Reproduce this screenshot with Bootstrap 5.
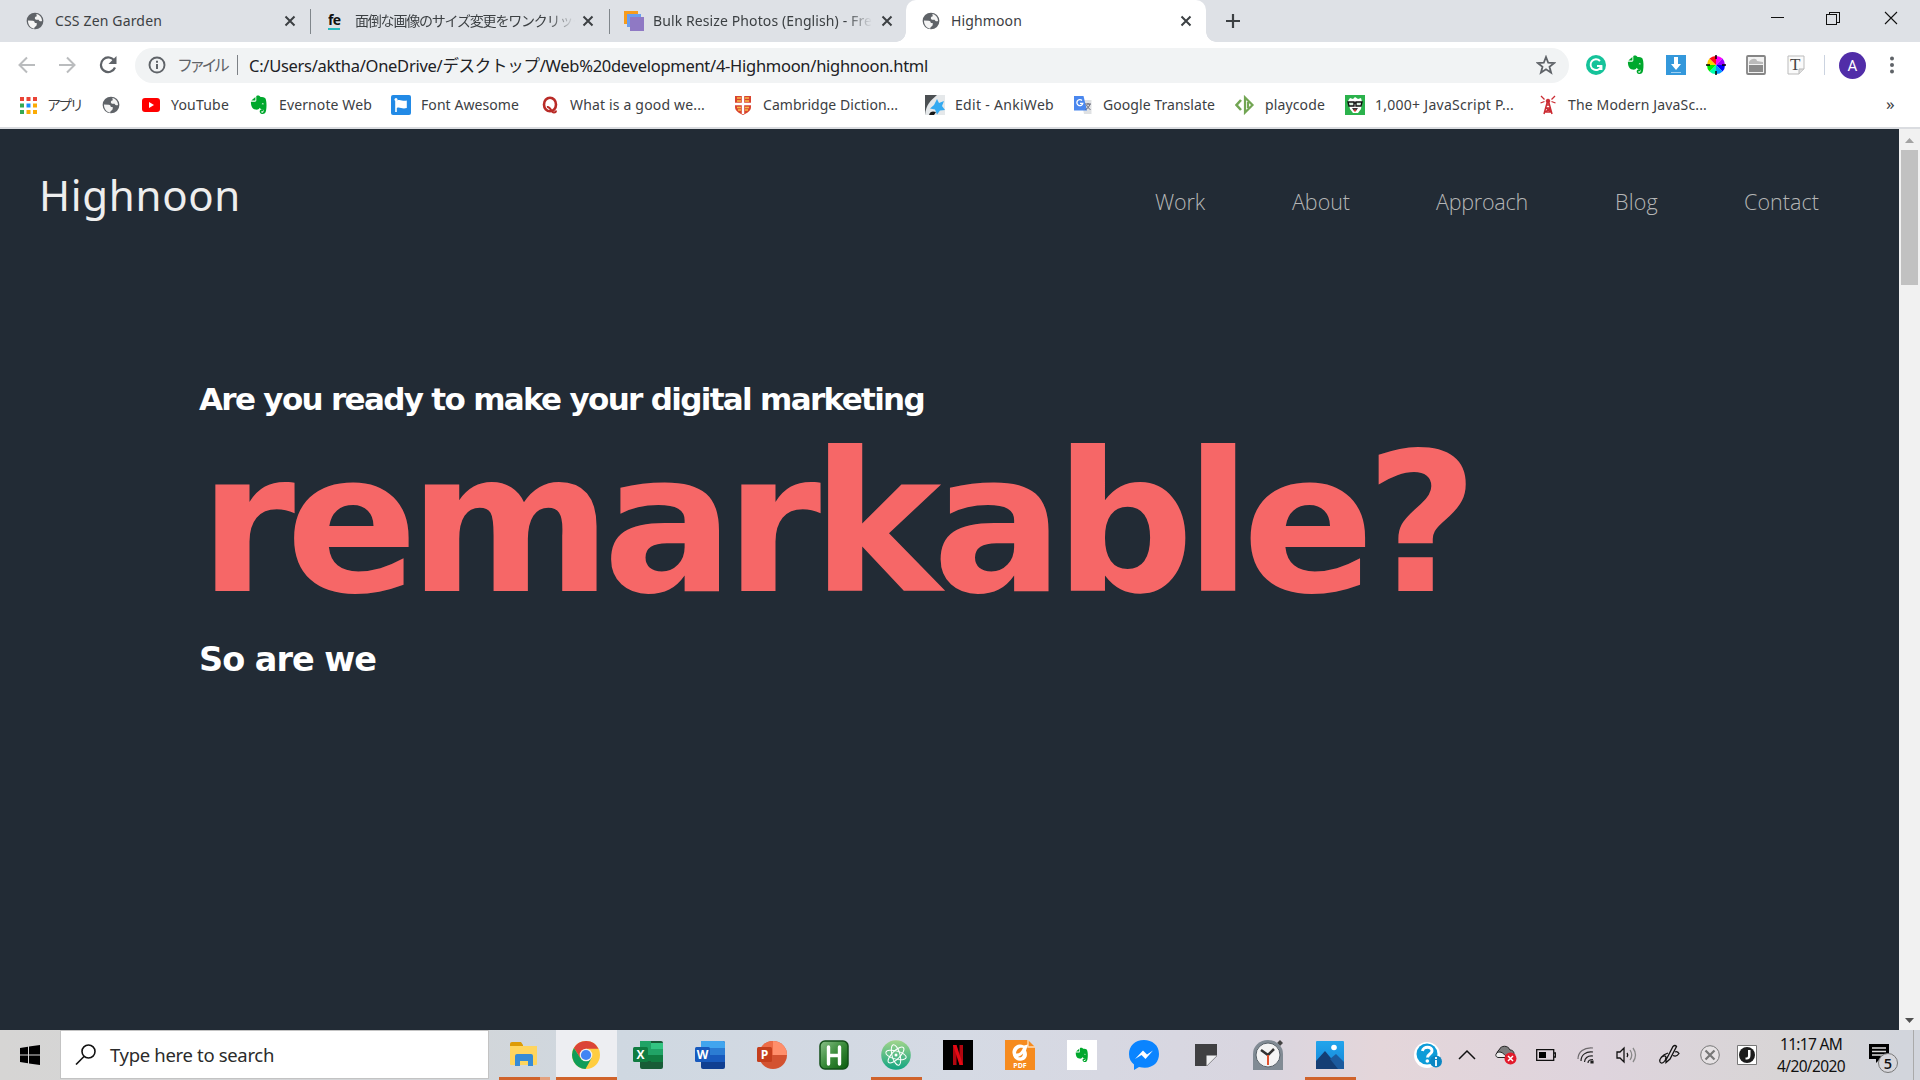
<!DOCTYPE html>
<html lang="en">
<head>
<meta charset="utf-8">
<title>Highmoon</title>
<link href="https://cdn.jsdelivr.net/npm/bootstrap@5.3.0/dist/css/bootstrap.min.css" rel="stylesheet">
<style>
body{width:1920px;height:1080px;overflow:hidden;background:#fff;font-family:"Noto Sans","Noto Sans CJK JP",sans-serif;color:#3c4043}
svg{display:block;flex:none}
[data-w]{white-space:nowrap;display:inline-block}
.tabstrip{height:42px;background:#dee1e6;font-size:14px}
.btab{height:42px;line-height:42px;padding-left:24px;position:relative}
.btab .fav{width:22px;margin-right:9px}
.btab .ttl{height:42px;overflow:hidden;white-space:nowrap}
.fade-r{-webkit-mask-image:linear-gradient(90deg,#000 88%,transparent)}
.btab.t1{width:310px}.btab.t2{width:299px;padding-left:18px}.btab.t3{width:297px}.btab.on{width:300px;background:#fff;border-radius:10px 10px 0 0;padding-left:14px}
.btab.on:before,.btab.on:after{content:"";position:absolute;bottom:0;width:10px;height:10px}
.btab.on:before{left:-10px;background:radial-gradient(circle at 0 0,transparent 9.5px,#fff 10px)}
.btab.on:after{right:-10px;background:radial-gradient(circle at 100% 0,transparent 9.5px,#fff 10px)}
.tsep{width:1px;height:25px;background:#80868b;position:absolute;right:-1px;top:9px}
.toolbar{height:46px;padding-left:7px}
.tcell{width:40px}
.omni{width:1434px;height:35px;border-radius:18px;background:#f1f3f4;margin:0 7px 0 6px;line-height:33px;font-size:16.5px;color:#202124}
.bookmarks{display:grid;grid-template-columns:83px 40px 108px 142px 149px 193px 192px 148px 162px 110px 193px 342px 30px;padding-left:16px;font-size:14px;line-height:34px;height:34px}
.bookmarks>div{display:flex;align-items:center;gap:8px;white-space:nowrap}
.bookmarks .ic{width:24px;display:flex;justify-content:center}
.bline{height:2px;background:#dadce0;margin-top:5px}
.viewport{height:901px}
.site{width:1899px;background:#222b35;font-family:"DejaVu Sans",sans-serif}
.scroller{width:21px;background:#f1f1f1;padding:0 2px}
.thumb{height:135px;background:#c1c1c1}
.sitehead{height:148px;padding:37px 0 0 39px}
.logo{font-family:"Noto Sans",sans-serif;font-size:42px;line-height:58px;color:#eee}
.sitenav{display:grid;grid-template-columns:137px 144px 179px 129px 155px;font-family:"Open Sans","Noto Sans",sans-serif;font-weight:300;font-size:21.5px;line-height:30px;color:#b5b6b6;padding-top:21px}
.hero{padding:72px 0 0 199px;font-weight:700;color:#fff}
.l1{font-size:31px;line-height:50px;padding-top:25px}
.l2{font-size:195px;line-height:210px;color:#f66767;margin-top:-5px}
.l3{font-size:33.5px;line-height:50px;margin-top:6px}
.taskbar{height:50px;background:linear-gradient(90deg,#d6d5d4 0,#d2d6da 480px,#cfd8e1 620px,#d5dae4 960px,#d9d6e0 1250px,#e4d6da 1380px,#ded4dd 1600px,#d8d5d6 1780px,#d2d5dc 1900px)}
.searchbox{width:429px;height:49px;background:#fff;border:1px solid #c3c3c3;font-size:18.5px;color:#2b2b2b;line-height:46px;margin-bottom:1px}
.app{width:62px;height:50px;position:relative;display:flex;align-items:center;justify-content:center}
.app.run:after{content:"";position:absolute;bottom:0;left:6px;width:51px;height:3px;background:#d0632b}
.app.multi:after{background:linear-gradient(90deg,#d0632b 41px,#e3a17e 41px)}
.app.front{background:linear-gradient(90deg,transparent 1px,#edeef2 1px)}
.app.front:after{left:1px;width:61px}
.tray{margin-left:47px;display:grid;grid-template-columns:39px 39px 40px 40px 40px 40px 45px 38px 35px 94px 55px 6px}
.tray>div{display:flex;align-items:center;justify-content:center}
.clk{font-size:15.5px;line-height:22.5px;color:#111;flex-direction:column}
.tline{border-left:1px solid #aaa}
</style>
<script src="https://cdn.jsdelivr.net/npm/bootstrap@5.3.0/dist/js/bootstrap.bundle.min.js"></script>
</head>
<body class="d-flex flex-column">
<svg width="0" height="0" class="position-absolute">
<symbol id="globe" viewBox="0 0 20 20"><circle cx="10" cy="10" r="9.3" fill="#5f6368"/><path d="M2.2 9.5l5.3.2c1.6.2 2.3 1.1 2.3 2.6h2.1v2.3l-2.7 2.8v1.1C5 18 2.1 14 2.2 9.500zM11.500 2.200C15 3 17.700 5.500 17.800 10c-1.400.8-3 .5-3.800-1.500h-3c-1.400-.8-1.600-2.300-.5-3.300l1.500-.4z" fill="#fff" opacity=".93"/></symbol>
<symbol id="close" viewBox="0 0 12 12"><path d="M1.500 1.500l9 9m0-9l-9 9" stroke="#3c4043" stroke-width="2"/></symbol>
<symbol id="elephant" viewBox="0 0 20 22"><path d="M7 1c2-1 4-.4 4.700 1.200 2 .1 4.600.3 5.500 1.500 1.300 3 1.500 9 .6 13.700-.5 2.600-2 3.900-4.500 3.600-3-.3-3.400-4.400-.8-4.900l2 .2v1.700h-1.600c-.8.700-.3 1.500.6 1.500 1.800-.1 1.800-2 1.300-3.200-1.600-.4-3.500-.8-4-2.300C9.800 16 8 16.500 6 16 2.500 15.500 1 12 1 7.300h4.300C6.800 7.300 7 6.500 7 5.500zM6 2v4H1.500z" fill="#00a82d"/><path d="M13 10.300c.3-1.500 2-1.600 2.500 0z" fill="#fff"/></symbol>
</svg>

<header class="tabstrip d-flex">
 <div class="btab t1 d-flex align-items-center"><svg class="fav" width="18" height="18"><use href="#globe"/></svg><div class="ttl flex-grow-1"><span data-w="107">CSS Zen Garden</span></div><svg width="12" height="12" style="margin-right:14px"><use href="#close"/></svg><i class="tsep"></i></div>
 <div class="btab t2 d-flex align-items-center"><svg width="16" height="18" style="margin-right:11px"><text x="0" y="13" font-size="14" font-weight="700" fill="#111" textLength="13" font-family="Open Sans">fe</text><path d="M0 17h12" stroke="#23b8bd" stroke-width="2"/></svg><div class="ttl fade-r" style="width:220px"><span data-w="230" style="font-size:14px">面倒な画像のサイズ変更をワンクリック</span></div><svg width="12" height="12" class="ms-auto" style="margin-right:15px"><use href="#close"/></svg><i class="tsep"></i></div>
 <div class="btab t3 d-flex align-items-center" style="padding-left:14px"><svg width="22" height="22" style="margin-right:8px"><path fill="#f79c1c" d="M1 1h14v13H1z"/><path fill="#6a9df0" d="M4 4h14v13H4z"/><path fill="#8f79c4" d="M7 7h14v14H7z"/></svg><div class="ttl fade-r" style="width:219px"><span data-w="227">Bulk Resize Photos (English) - Free</span></div><svg width="12" height="12" class="ms-auto" style="margin-right:13px"><use href="#close"/></svg></div>
 <div class="btab on d-flex align-items-center"><svg class="fav" width="18" height="18"><use href="#globe"/></svg><div class="ttl flex-grow-1"><span data-w="71">Highmoon</span></div><svg width="12" height="12" style="margin-right:14px"><use href="#close"/></svg></div>
 <svg width="16" height="16" viewBox="0 0 16 16" style="margin:13px 0 0 19px"><path d="M8 1v14M1 8h14" stroke="#3c4043" stroke-width="2.200"/></svg>
 <svg class="ms-auto" width="150" height="36" fill="none" stroke="#111" shape-rendering="crispEdges"><path d="M1 17.500h13"/><path d="M56.500 14.500h10v10h-10zM59.500 14v-2h10v10h-3"/><path d="M115 12l12 12m0-12l-12 12" shape-rendering="auto" stroke-width="1.100"/></svg>
</header>

<div class="toolbar d-flex align-items-center">
 <div class="tcell d-flex justify-content-center"><svg width="18" height="18" fill="none" stroke="#babcbe" stroke-width="2"><path d="M17 9H2M9 1.500L1.500 9 9 16.500"/></svg></div>
 <div class="tcell d-flex justify-content-center"><svg width="18" height="18" fill="none" stroke="#babcbe" stroke-width="2"><path d="M1 9h15M9 1.500L16.500 9 9 16.500"/></svg></div>
 <div class="tcell d-flex justify-content-center" style="width:42px"><svg width="18" height="18"><path d="M15.500 5A7.300 7.300 0 1 0 16 11.500" fill="none" stroke="#5f6368" stroke-width="2.200"/><path d="M17.500 0v8h-8z" fill="#5f6368"/></svg></div>
 <div class="omni d-flex align-items-center"><svg width="18" height="18" style="margin:0 11px 0 13px" fill="none" stroke="#5f6368"><circle cx="9" cy="9" r="7.500" stroke-width="1.900"/><path d="M9 8v5M9 4.700v2" stroke-width="2"/></svg><span data-w="49" style="color:#5f6368;font-size:16px">ファイル</span><i style="width:1px;height:20px;background:#7d8186;margin:0 11px 0 11px"></i><span data-w="679">C:/Users/aktha/OneDrive/デスクトップ/Web%20development/4-Highmoon/highnoon.html</span><svg width="20" height="20" class="ms-auto" style="margin-right:13px"><path d="M10 2l2.200 5.700 6 .3-4.700 3.800 1.600 5.900L10 14.300l-5.100 3.400 1.600-5.900L1.800 8l6-.3z" fill="none" stroke="#5f6368" stroke-width="1.800"/></svg></div>
 <div class="tcell d-flex justify-content-center"><svg width="20" height="20"><circle cx="10" cy="10" r="10" fill="#15c39a"/><path d="M14 6a5.400 5.400 0 1 0 1.200 5H11m4.500-.3V15" fill="none" stroke="#fff" stroke-width="1.900"/></svg></div>
 <div class="tcell d-flex justify-content-center"><svg width="18" height="20"><use href="#elephant"/></svg></div>
 <div class="tcell d-flex justify-content-center"><svg width="20" height="20"><path fill="#3498db" d="M0 0h20v20H0z"/><path d="M8 2h4v7h3l-5 6-5-6h3z" fill="#fff"/><path d="M5 17.500h10" stroke="#9fd0f2"/></svg></div>
 <div class="tcell d-flex justify-content-center"><svg width="20" height="20" viewBox="-10 -10 20 20"><path d="M0 0V-9A9 9 0 0 1 6.500-6.500z" fill="#f0f"/><path d="M0 0L6.500-6.500A9 9 0 0 1 9 0z" fill="#90f"/><path d="M0 0H9A9 9 0 0 1 6.500 6.500z" fill="#00f"/><path d="M0 0L6.500 6.500A9 9 0 0 1 0 9z" fill="#09f"/><path d="M0 0V9A9 9 0 0 1-6.500 6.500z" fill="#0fa"/><path d="M0 0L-6.500 6.500A9 9 0 0 1-9 0z" fill="#0e0"/><path d="M0 0H-9A9 9 0 0 1-6.500-6.500z" fill="#fc0"/><path d="M0 0L-6.500-6.500A9 9 0 0 1 0-9z" fill="#f11"/><path d="M0-10v4M0 10V6M-10 0h4M10 0H6" stroke="#000" stroke-width="1.500"/></svg></div>
 <div class="tcell d-flex justify-content-center"><svg width="20" height="20"><rect x="1" y="1" width="18" height="18" rx="1" fill="#f2f2f2" stroke="#858585" stroke-width="1.800"/><path d="M3 10h14v7H3z" fill="#8b8b8b"/><path d="M3 7c2-4 8-4 8-1l6 1v2H3z" fill="#bbb"/></svg></div>
 <div class="tcell d-flex justify-content-center"><svg width="18" height="20"><path d="M1 1h16v13l-5 5H1z" fill="#fafafa" stroke="#bbb"/><path d="M12 19v-5h5" fill="#ddd" stroke="#bbb"/><text x="3" y="15" font-family="Liberation Serif" font-size="17" fill="#444">T</text></svg></div>
 <i style="width:1px;height:20px;background:#cbd3e0;margin:0 7px 0 8px"></i>
 <div class="tcell d-flex justify-content-center"><svg width="27" height="27"><circle cx="13.500" cy="13.500" r="13.500" fill="#512da8"/><text x="13.500" y="19" text-anchor="middle" font-family="Roboto" font-size="15" fill="#fff">A</text></svg></div>
 <div class="tcell d-flex justify-content-center"><svg width="4" height="18" fill="#5f6368"><circle cx="2" cy="2.500" r="2"/><circle cx="2" cy="9" r="2"/><circle cx="2" cy="15.500" r="2"/></svg></div>
</div>

<nav class="bookmarks">
 <div style="gap:7px"><span class="ic"><svg width="17" height="17"><path fill="#ea4335" d="M0 0h4v4H0zM6.500 0h4v4h-4zM13 0h4v4h-4z"/><path fill="#34a853" d="M0 6.500h4v4H0zM0 13h4v4H0z"/><path fill="#1a8cff" d="M6.500 6.500h4v4h-4z"/><path fill="#fbab05" d="M13 6.500h4v4h-4zM6.500 13h4v4h-4zM13 13h4v4h-4z"/></svg></span><span data-w="34">アプリ</span></div>
 <div><span class="ic"><svg width="18" height="18"><use href="#globe"/></svg></span></div>
 <div><span class="ic"><svg width="18" height="14"><rect width="18" height="14" rx="3" fill="#f00"/><path d="M7 4l5 3-5 3z" fill="#fff"/></svg></span><span data-w="58">YouTube</span></div>
 <div><span class="ic"><svg width="18" height="20"><use href="#elephant"/></svg></span><span data-w="93">Evernote Web</span></div>
 <div><span class="ic"><svg width="20" height="20"><rect width="20" height="20" rx="2" fill="#228ae6"/><circle cx="5" cy="4.500" r="1.500" fill="#fff"/><path d="M4.200 5v12h1.600v-4c3-1.500 5 1.500 10 0V5.500c-4 1.300-6-1.500-10 0z" fill="#fff"/></svg></span><span data-w="98">Font Awesome</span></div>
 <div><span class="ic"><svg width="18" height="18"><ellipse cx="9" cy="8.500" rx="6" ry="6.800" fill="none" stroke="#b92b27" stroke-width="2.600"/><path d="M6 11c4-1 4 6 7 5.500 1.600 0 2-1 2-2" fill="none" stroke="#b92b27" stroke-width="2"/></svg></span><span data-w="135">What is a good we...</span></div>
 <div><span class="ic"><svg width="18" height="20"><path d="M1 1h16v11c0 4-4 6-8 8-4-2-8-4-8-8z" fill="#d9442f"/><path d="M9 1v18M1 9h16" stroke="#fff" stroke-width="2.400"/><path d="M3 3h4M3 6h4M11 3h4M11 6h4M3 12.500h4M11 12.500h4M4 15h3M11 15h3" stroke="#f8bc47" stroke-width="1.400"/></svg></span><span data-w="135">Cambridge Diction...</span></div>
 <div><span class="ic"><svg width="20" height="20"><path fill="#4c5053" d="M0 0h20v20H0z"/><path d="M0 20C1 10 5 6 12 0h8v20z" fill="#e5e8ea"/><path d="M12 4l2 4 5-2-2 5 3 4-5 .5-3 4-2-5-5-1 4-3.500z" fill="#34aaf1"/><path d="M4 20c1-4 4-4 7-3l-2 3z" fill="#161616"/></svg></span><span data-w="99">Edit - AnkiWeb</span></div>
 <div><span class="ic"><svg width="20" height="20"><path fill="#dfe1e3" d="M8 5h10.500v14H11z"/><path fill="#4a87ee" d="M1 1h9.500l3.500 14.500H1z"/><path d="M9 5.500a3 3 0 1 0 .8 2.800H7" fill="none" stroke="#fff" stroke-width="1.300"/><path d="M12 9h6M15 8v1.500M17 9c-1 3-2 4-4.500 5.500M13.500 10c1 2 2 3.500 4 4.500" fill="none" stroke="#667" /></svg></span><span data-w="112">Google Translate</span></div>
 <div><span class="ic"><svg width="20" height="20" fill="none" stroke="#72a553" stroke-width="2.600"><path d="M6 5l-4.500 5L6 15"/><path d="M10 2.500v15l7.500-7.500zM13 7v6" stroke-width="2.200"/></svg></span><span data-w="60">playcode</span></div>
 <div><span class="ic"><svg width="20" height="20"><path fill="#2bb24c" d="M0 0h20v20H0z"/><path d="M3 6l2-3 3 1 2-2 3 2 3-1 1 4-1 7-3 4h-5l-3-4z" fill="#fff"/><path d="M3 7h6v4H4zM11 7h6l-1 4h-5zM9 8h2" fill="#d9eee0" stroke="#111" stroke-width="1.400"/><path d="M7 13h6l-2 3H9z" fill="#333"/><path d="M9 14.500h2v2H9z" fill="#d33"/></svg></span><span data-w="139">1,000+ JavaScript P...</span></div>
 <div><span class="ic"><svg width="18" height="20" fill="none" stroke="#cb2b32"><path d="M5 19L8 8h2l3 11M6 13h6M5 17h8M7 10h4M7 13l5 4M12 13l-6 4" stroke-width="1.500"/><circle cx="9" cy="6" r="1.800" fill="#cb2b32"/><path d="M5.500 6.500L1.500 8M5.500 4.500L2 1M12.500 6.500l4 1.500M12.500 4.500L16 1" stroke-width="1.300"/></svg></span><span data-w="139">The Modern JavaSc...</span></div>
 <div><span style="font-size:17px;padding-left:8px;line-height:30px;padding-bottom:2px">»</span></div>
</nav>
<div class="bline"></div>

<main class="viewport d-flex">
 <div class="site">
  <div class="sitehead d-flex justify-content-between">
   <div class="logo"><span data-w="202">Highnoon</span></div>
   <div class="sitenav"><span><span data-w="50">Work</span></span><span><span data-w="58">About</span></span><span><span data-w="92">Approach</span></span><span><span data-w="43">Blog</span></span><span><span data-w="75">Contact</span></span></div>
  </div>
  <section class="hero">
   <div class="l1"><span data-w="725">Are you ready to make your digital marketing</span></div>
   <div class="l2"><span data-w="1270">remarkable?</span></div>
   <div class="l3"><span data-w="177">So are we</span></div>
  </section>
 </div>
 <div class="scroller d-flex flex-column"><svg width="17" height="21"><path d="M4 14h9L8.500 9z" fill="#a3a3a3"/></svg><div class="thumb"></div><svg class="mt-auto" width="17" height="21"><path d="M4 9h9l-4.500 5z" fill="#505050"/></svg></div>
</main>

<footer class="taskbar d-flex">
 <div class="d-flex align-items-center justify-content-center" style="width:60px"><svg width="20" height="20"><path d="M0 3l8-1.200v7.700H0zM9 1.600L20 0v9.500H9zM0 10.500h8v7.700L0 17zM9 10.500h11V20L9 18.400z"/></svg></div>
 <div class="searchbox d-flex align-items-center"><svg width="21" height="21" style="margin:0 14px 0 14px" fill="none" stroke="#111" stroke-width="1.600"><circle cx="13.500" cy="7.500" r="6.500"/><path d="M9 12.500L1 20.500"/></svg><span data-w="164">Type here to search</span></div>
 <div class="app run multi" style="margin-left:4px"><svg width="28" height="26"><path d="M0 2q0-2 2-2h9l2 3v4H0z" fill="#dd9b06"/><path d="M0 4h27v18q0 1-1 1H1q-1 0-1-1z" fill="#ffd55e"/><path d="M5 24V14q0-2 2-2h14q2 0 2 2v10h-5v-5h-8v5z" fill="#368bd6"/></svg></div>
 <div class="app run front"><svg width="28" height="28" viewBox="-14 -14 28 28"><circle r="14" fill="#ffcd40"/><path d="M-12.100-7A14 14 0 0 1 12.500-6.300L0-6.300-5.500 3.200z" fill="#db4437"/><path d="M-12.100-7A14 14 0 0 0-.5 14L5.500 3.200H-5.500z" fill="#0f9d58"/><circle r="6.300" fill="#f1f1f1"/><circle r="5.100" fill="#4285f4"/></svg></div>
 <div class="app"><svg width="30" height="28"><rect x="7" width="23" height="28" rx="2" fill="#185c37"/><path d="M7 0h11v14H7z" fill="#21a366"/><path d="M18 2h12v6H18z" fill="#33c481"/><path d="M18 8h12v6H18z" fill="#21a366"/><path d="M7 14h11v6H7z" fill="#107c41"/><path d="M18 14h12v7H18z" fill="#107c41"/><rect y="6" width="15" height="15" rx="1.500" fill="#107c41"/><text x="7.500" y="18" text-anchor="middle" font-family="Open Sans" font-weight="700" font-size="12" fill="#fff">X</text></svg></div>
 <div class="app"><svg width="30" height="28"><rect x="6" width="24" height="28" rx="2" fill="#103f91"/><path d="M6 0h22q2 0 2 2v5H6z" fill="#41a5ee"/><path d="M6 7h24v7H6z" fill="#2b7cd3"/><path d="M6 14h24v7H6z" fill="#185abd"/><rect y="6" width="15" height="15" rx="1.500" fill="#185abd"/><text x="7.500" y="18" text-anchor="middle" font-family="Open Sans" font-weight="700" font-size="12" fill="#fff">W</text></svg></div>
 <div class="app"><svg width="30" height="28"><circle cx="16" cy="14" r="14" fill="#d35230"/><path d="M16 0A14 14 0 0 0 2 14h14z" fill="#ed6c47"/><path d="M16 0a14 14 0 0 1 14 14H16z" fill="#ff8f6b"/><rect y="6" width="15" height="15" rx="1.500" fill="#c43e1c"/><text x="7.500" y="18" text-anchor="middle" font-family="Open Sans" font-weight="700" font-size="12" fill="#fff">P</text></svg></div>
 <div class="app"><svg width="30" height="30"><defs><linearGradient id="hg" x1="0" y1="0" x2="1" y2="1"><stop offset="0" stop-color="#8bc18b"/><stop offset=".5" stop-color="#398b39"/><stop offset="1" stop-color="#0a5c0e"/></linearGradient></defs><rect x="1" y="1" width="28" height="28" rx="5" fill="url(#hg)" stroke="#124f18" stroke-width="1.500"/><path d="M9.500 7v17M20.500 7v17M9.500 15.500h11" stroke="#fff" stroke-width="3.400" stroke-linecap="round"/></svg></div>
 <div class="app run"><svg width="30" height="30" viewBox="-15 -15 30 30"><defs><linearGradient id="ag" x1="0" y1="0" x2="0" y2="1"><stop offset="0" stop-color="#a2d58b"/><stop offset="1" stop-color="#12a582"/></linearGradient></defs><circle r="14.800" fill="url(#ag)"/><g fill="none" stroke="#fff" stroke-width="1"><ellipse rx="10.500" ry="4" transform="rotate(15)"/><ellipse rx="10.500" ry="4" transform="rotate(75)"/><ellipse rx="10.500" ry="4" transform="rotate(135)"/></g><circle r="1.500" fill="#fff"/></svg></div>
 <div class="app"><svg width="30" height="30"><path d="M0 0h30v30H0z"/><path d="M10 5h3.500v20H10zM16.500 5H20v20h-3.500z" fill="#b1060f"/><path d="M10 5h3.500L20 25h-3.500z" fill="#e50914"/></svg></div>
 <div class="app"><svg width="30" height="30"><path d="M0 0h23l7 7v23H0z" fill="#f68b1f"/><path d="M23 0v7h7" fill="none" stroke="#fde0bd" stroke-width="1.300"/><path d="M19 5.500C12 2 7 8 7.500 13c.5 6 5 8.500 9.500 7.500 5-1 6-6 4-10l2-6z" fill="#fff"/><path d="M18 8c-4-1-7 2-7 5.500 3 .5 5-1 7-5.500zM13 17c2 1 5 0 5-3.500-1 1.500-3 2.500-5 3.500z" fill="#f68b1f"/><text x="15" y="28" text-anchor="middle" font-family="Open Sans" font-size="7" font-weight="700" fill="#fff">PDF</text></svg></div>
 <div class="app"><svg width="30" height="30"><path d="M0 0h30v30H0z" fill="#fff"/><svg x="8" y="7" width="14" height="16"><use href="#elephant"/></svg></svg></div>
 <div class="app"><svg width="30" height="30"><path d="M15 0C6 0 0 6 0 14c0 5 2 8 5 10.500V30l5-3c13 3 20-4 20-13S23 0 15 0z" fill="#0a84ff"/><path d="M6 19l8-8.500 4 4 6-4-7.500 8.500-4-4z" fill="#fff"/></svg></div>
 <div class="app"><svg width="24" height="24"><path d="M1 1h22v12l-10 10H1z" fill="#404042"/><path d="M12.500 23V12.500H23z" fill="#efeff1"/></svg></div>
 <div class="app"><svg width="30" height="30"><path d="M24 3l3-3 3 3-3 3z" fill="#444"/><path d="M0 30V14a15 14 0 0 1 30 0v16z" fill="#818b94"/><circle cx="15" cy="15" r="12" fill="#f4f4f4" stroke="#59626a"/><path d="M8 10l7 5 6-6" fill="none" stroke="#333" stroke-width="2.500"/><path d="M15 15v10" stroke="#e3512c" stroke-width="2"/></svg></div>
 <div class="app run"><svg width="28" height="28"><defs><linearGradient id="pg" x1="0" y1="0" x2="0" y2="1"><stop offset="0" stop-color="#22a5ec"/><stop offset="1" stop-color="#1685d8"/></linearGradient></defs><rect width="28" height="28" rx="1" fill="url(#pg)"/><path d="M0 20L9 10l15 18H0z" fill="#143e74"/><path d="M14 18l6-5 8 8v7h-6z" fill="#1c5b9e"/><circle cx="18" cy="6.500" r="2.800" fill="#fff"/></svg></div>
 <div class="tray">
  <div><svg width="30" height="28"><circle cx="14" cy="14" r="13" fill="#fff"/><circle cx="14" cy="13" r="10.500" fill="#0e9cd8"/><path d="M9.500 10c.5-5 10-5 9.500 0 0 3-4.500 3-4.500 6.500" fill="none" stroke="#fff" stroke-width="3"/><circle cx="14.300" cy="20" r="1.800" fill="#fff"/><circle cx="23" cy="20.500" r="6" fill="#0b86c3"/><path d="M23 19v6M23 16v2" stroke="#fff" stroke-width="1.800"/></svg></div>
  <div><svg width="18" height="12"><path d="M1 10l8-8 8 8" fill="none" stroke="#111" stroke-width="1.500"/></svg></div>
  <div><svg width="22" height="20"><path d="M4 12a4 4 0 0 1 0-7c2-5 9-5 11 0 4 0 5 4 3 7z" fill="#7c7c7c" stroke="#222"/><path d="M3 12.500c-4-1-2-6 2-5.500 3 0 6 5 8 5.500z" fill="#eee" stroke="#222"/><circle cx="15.500" cy="13.500" r="6" fill="#e21b2c"/><path d="M13 11l5 5m0-5l-5 5" stroke="#fff" stroke-width="1.500"/></svg></div>
  <div><svg width="20" height="12"><path d="M.7.700h17v10.600H.7zM18 4h1.500v4H18" fill="none" stroke="#111" stroke-width="1.300"/><path d="M3 3h7v6H3z"/></svg></div>
  <div><svg width="18" height="18" fill="none" stroke="#222" stroke-width="1.200"><path d="M1 13C1 6 7 1 16 2" opacity=".6"/><path d="M4 15C4 9 9 5 16 6M7.500 16C8 12 11 9.500 16 10M11 17c0-2 2-3.500 5-3.500"/><path d="M14 15h2v2h-2z" fill="#111"/></svg></div>
  <div><svg width="21" height="18" fill="none" stroke="#111" stroke-width="1.300"><path d="M1 6h3l4-4v14l-4-4H1z"/><path d="M11 7q1.500 2 0 4"/><path d="M14 4q3.500 5 0 10M17 2q5 7 0 14" stroke="#888"/></svg></div>
  <div><svg width="22" height="22" fill="none" stroke="#111" stroke-width="1.300"><path d="M8 16L15 2.500q2-2 3.500 0L12 15l-4 3.500zM17 8c2-1 3 0 4 1.500-2 3-4 3-6 2M10 9c-6 2-9 6-8 9 2 3 6-1 6-5-1-2-4-1-5 1"/></svg></div>
  <div><svg width="20" height="20" fill="none" stroke="#777"><circle cx="10" cy="10" r="9.300" fill="#e6e2e4"/><path d="M5.500 5.500l9 9m0-9l-9 9" stroke-width="2.200"/></svg></div>
  <div><svg width="20" height="20"><path d="M.5.500h19v19H.5z" fill="#fff" stroke="#777"/><circle cx="10" cy="10" r="8" fill="#1c1c1c"/><path d="M11 5h2.500v5c0 4-2 5-5 4.500v-2c2 .3 2.500-.5 2.500-2z" fill="#fff"/></svg></div>
  <div class="clk"><span data-w="62">11:17 AM</span><span data-w="68">4/20/2020</span></div>
  <div><svg width="36" height="36"><path d="M1 7h20v15H12l-4 4v-4H1z"/><path d="M4 11h14M4 14.500h14M4 18h14" stroke="#ddd" stroke-width="1.300"/><circle cx="20" cy="26" r="9.500" fill="#d6d6db" stroke="#777" stroke-width="1"/><text x="20" y="31.500" text-anchor="middle" font-family="Open Sans" font-size="14.500" font-weight="600" fill="#111">5</text></svg></div>
  <div class="tline"></div>
 </div>
</footer>
<script>
document.querySelectorAll('[data-w]').forEach(el=>{
  const gap=(el.dataset.w-el.getBoundingClientRect().width)/[...el.textContent].length;
  el.style.letterSpacing=gap.toFixed(3)+'px';
});
</script>
</body>
</html>
